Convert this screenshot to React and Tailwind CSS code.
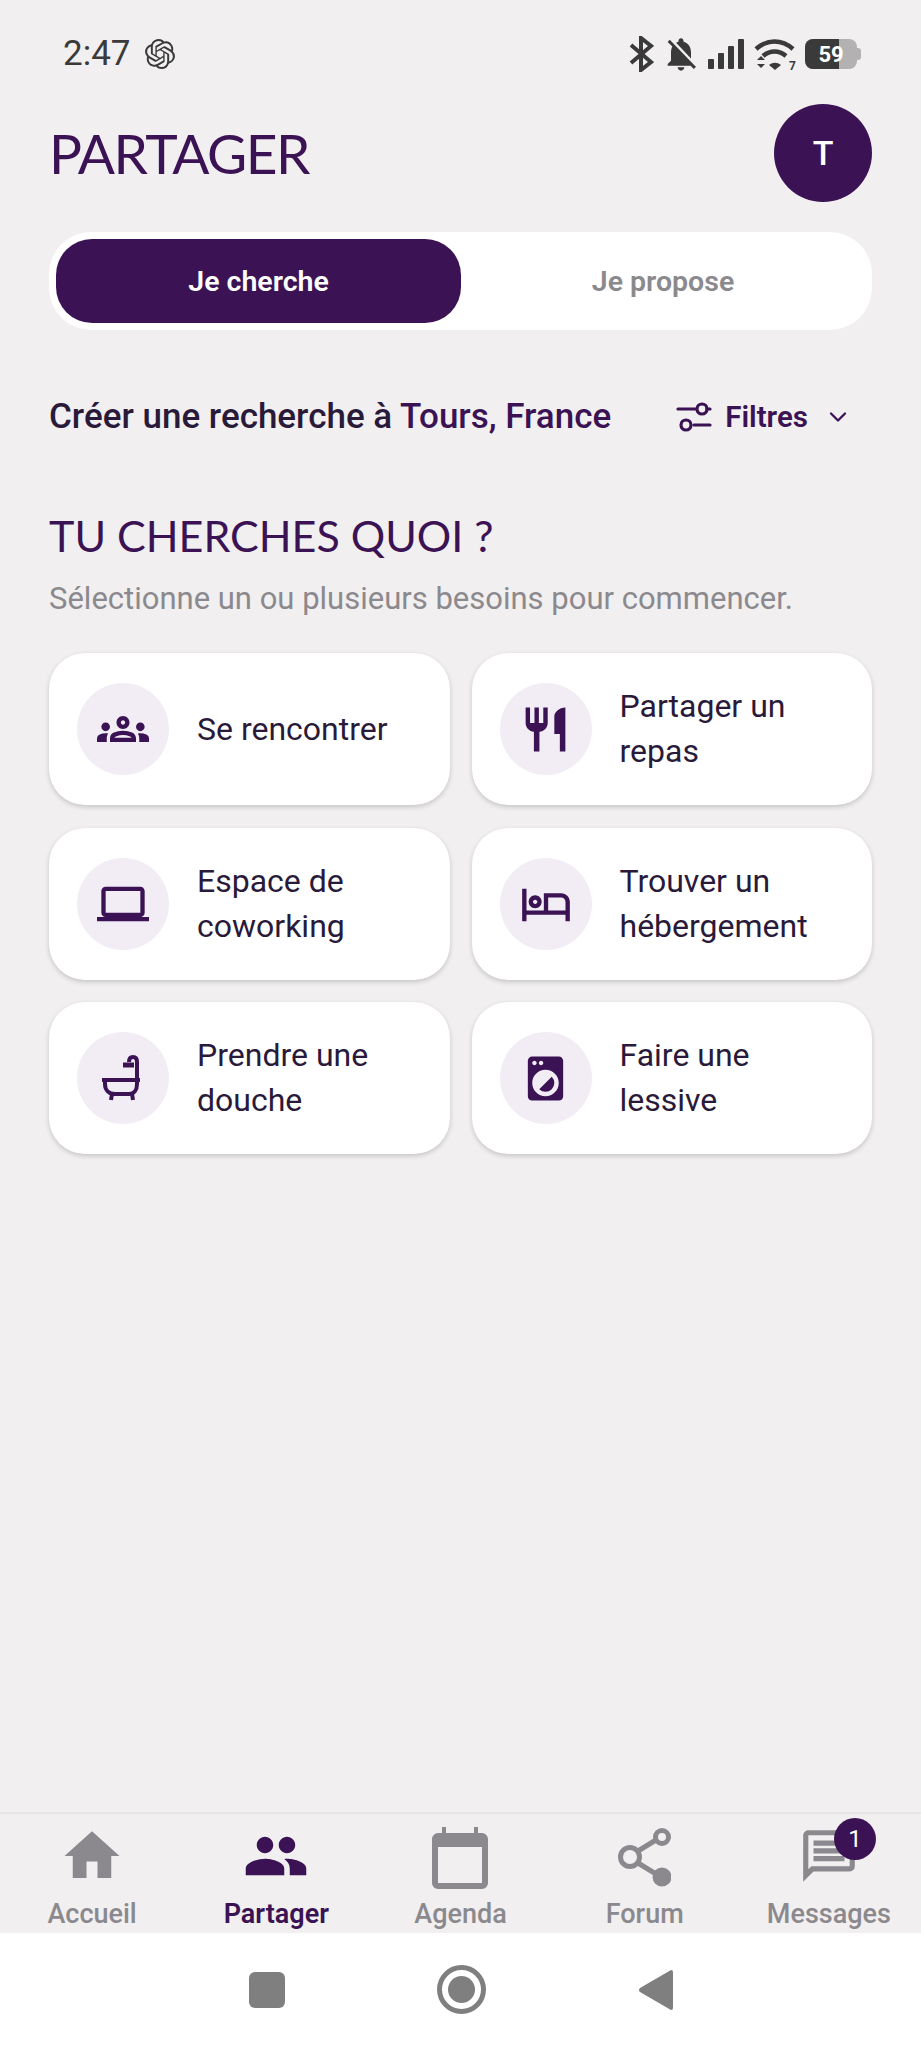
import React from 'react';
import { ChevronDown } from 'lucide-react';
import {
  MdHome,
  MdLaptop,
  MdLocalLaundryService,
  MdNotificationsOff,
  MdOutlineGroups,
  MdOutlineHotel,
  MdOutlineMessage,
  MdPeople,
  MdRestaurant,
} from 'react-icons/md';
import { SiOpenai } from 'react-icons/si';

const BathIcon = ({ className }) => (
  <svg viewBox="0 0 48 48" className={className} fill="none" stroke="currentColor" strokeWidth="4">
    <path d="M3 26h38" strokeWidth="4" />
    <path d="M6 26v4c0 6 4 10 10 10h14c5 0 8-4 8-10v-4" />
    <path d="M13 40l-1 6M33 40l1 6" />
    <path d="M38 26V8c0-3-1-5-4-5s-4 2-4 5" />
    <path d="M24 11h11" strokeWidth="5" />
  </svg>
);

const FilterIcon = ({ className }) => (
  <svg viewBox="0 0 36 36" className={className} fill="none" stroke="currentColor" strokeWidth="3.2" strokeLinecap="round">
    <path d="M2 10h18M18 26h16" />
    <circle cx="26" cy="10" r="5" />
    <circle cx="10" cy="26" r="5" />
    <path d="M31 10h3" />
  </svg>
);

const CalendarIcon = ({ className }) => (
  <svg viewBox="0 0 56 62" className={className} fill="currentColor">
    <path d="M10 0h4v6h28V0h4v6h4c3 0 6 3 6 6v44c0 3-3 6-6 6H6c-3 0-6-3-6-6V12c0-3 3-6 6-6h4zM6 20v36h44V20z" />
  </svg>
);

const ShareIcon = ({ className }) => (
  <svg viewBox="0 0 53 59" className={className} fill="none" stroke="currentColor" strokeWidth="5">
    <path d="M20 23L38 12M20 35l18 11" />
    <circle cx="12" cy="29" r="9.500" />
    <circle cx="44" cy="9" r="6.500" />
    <circle cx="44" cy="49" r="7" fill="currentColor" />
  </svg>
);

const BluetoothIcon = ({ className }) => (
  <svg viewBox="0 0 25 36" className={className} fill="none" stroke="currentColor" strokeWidth="4">
    <path d="M2 9l20 17-10 8V2l10 8L2 27" />
  </svg>
);

const WifiIcon = ({ className }) => (
  <svg viewBox="0 0 41 32" className={className} fill="none" stroke="currentColor" strokeWidth="4.500">
    <path d="M2 11C13 1 28 1 39 11" />
    <path d="M9 18c7-6 16-6 23 0" />
    <path d="M15 27l6 5 6-5c-4-3-8-3-12 0z" fill="currentColor" stroke="none" />
    <path d="M3 22l4-4 4 4zM3 26l4 4 4-4z" fill="currentColor" stroke="none" />
  </svg>
);

const SignalIcon = () => (
  <div className="flex items-end gap-[4px] h-[30px]">
    <div className="w-[6px] h-[10px] rounded-[1px] bg-[#3a3a3a]" />
    <div className="w-[6px] h-[16px] rounded-[1px] bg-[#3a3a3a]" />
    <div className="w-[6px] h-[23px] rounded-[1px] bg-[#3a3a3a]" />
    <div className="w-[6px] h-[30px] rounded-[1px] bg-[#3a3a3a]" />
  </div>
);

const Battery = () => (
  <div className="flex items-center">
    <div className="relative w-[52px] h-[30px] rounded-[8px] overflow-hidden bg-[#b3b1b2]">
      <div className="h-full w-[34px] bg-[#3a3a3a]" />
      <span className="absolute inset-0 flex items-center justify-center text-[22px] font-bold text-white">59</span>
    </div>
    <div className="w-[4px] h-[12px] rounded-r-[3px] bg-[#b3b1b2]" />
  </div>
);

const needs = [
  { label: 'Se rencontrer', Icon: MdOutlineGroups, iconClass: 'w-[52px] h-[52px]' },
  { label: 'Partager un repas', Icon: MdRestaurant, iconClass: 'w-[53px] h-[53px]' },
  { label: 'Espace de coworking', Icon: MdLaptop, iconClass: 'w-[52px] h-[52px]' },
  { label: 'Trouver un hébergement', Icon: MdOutlineHotel, iconClass: 'w-[52px] h-[52px]' },
  { label: 'Prendre une douche', Icon: BathIcon, iconClass: 'w-[48px] h-[48px]' },
  { label: 'Faire une lessive', Icon: MdLocalLaundryService, iconClass: 'w-[53px] h-[53px]' },
];

const tabs = [
  { label: 'Accueil', Icon: MdHome, iconClass: 'w-[66px] h-[66px]' },
  { label: 'Partager', Icon: MdPeople, iconClass: 'w-[66px] h-[66px]', active: true },
  { label: 'Agenda', Icon: CalendarIcon, iconClass: 'w-[56px] h-[62px] mt-[3px]' },
  { label: 'Forum', Icon: ShareIcon, iconClass: 'w-[53px] h-[59px] mt-[3px]' },
  { label: 'Messages', Icon: MdOutlineMessage, iconClass: 'w-[62px] h-[62px]', badge: 1 },
];

const App = () => {
  return (
    <div className="w-[921px] h-[2048px] flex flex-col bg-[#f1eff0] font-['Roboto',sans-serif] text-[#2a1a3a] overflow-hidden">
      <div className="h-[104px] shrink-0 pl-[63px] pr-[60px] pb-[30px] flex items-end justify-between text-[#3a3a3a]">
        <div className="flex items-center gap-[14px]">
          <span className="text-[35px] leading-[40px]">2:47</span>
          <SiOpenai className="w-[30px] h-[30px]" />
        </div>
        <div className="flex items-center gap-[10px]">
          <BluetoothIcon className="w-[25px] h-[36px]" />
          <MdNotificationsOff className="w-[40px] h-[40px] -mx-[3px]" />
          <SignalIcon />
          <div className="relative">
            <WifiIcon className="w-[41px] h-[32px]" />
            <span className="absolute -right-[1px] -bottom-[3px] text-[12px] leading-[14px] font-bold">7</span>
          </div>
          <Battery />
        </div>
      </div>

      <div className="flex-1 px-[49px]">
        <div className="flex items-center justify-between h-[98px]">
          <h1 className="font-['Lato',sans-serif] text-[55px] font-normal text-[#3b1354] tracking-[-1.500px]">PARTAGER</h1>
          <div className="w-[98px] h-[98px] rounded-full bg-[#3b1354] flex items-center justify-center text-white text-[34px] font-medium">
            T
          </div>
        </div>

        <div className="mt-[30px] h-[98px] bg-white rounded-[42px] p-[7px] flex">
          <div className="w-[405px] rounded-[36px] bg-[#3b1354] text-white text-[28.500px] font-semibold flex items-center justify-center pt-[2px]">
            Je cherche
          </div>
          <div className="flex-1 text-[#8b898d] text-[28.500px] font-semibold flex items-center justify-center pt-[2px]">
            Je propose
          </div>
        </div>

        <div className="mt-[62px] flex items-center justify-between pr-[20px]">
          <div className="text-[35px] leading-[50px] font-medium text-[#2a1a3a]">
            Créer une recherche à <span className="text-[#3b1354]">Tours, France</span>
          </div>
          <div className="flex items-center text-[#3b1354] text-[29.500px] font-semibold">
            <FilterIcon className="w-[36px] h-[36px] mr-[13px]" />
            Filtres
            <ChevronDown className="w-[28px] h-[28px] ml-[16px]" />
          </div>
        </div>

        <h2 className="mt-[66px] font-['Lato',sans-serif] text-[43px] leading-[56px] font-normal text-[#3b1354]">
          TU CHERCHES QUOI ?
        </h2>
        <p className="mt-[13px] text-[31px] leading-[44px] text-[#8b898d]">
          Sélectionne un ou plusieurs besoins pour commencer.
        </p>

        <div className="mt-[32px] grid grid-cols-2 gap-x-[22px] gap-y-[22.500px]">
          {needs.map(({ label, Icon, iconClass }) => (
            <div
              key={label}
              className="h-[152px] bg-white rounded-[36px] shadow-[0_2px_5px_rgba(0,0,0,0.18)] pl-[28px] pr-[24px] flex items-center gap-[28px]"
            >
              <div className="w-[92px] h-[92px] shrink-0 rounded-full bg-[#f2edf5] text-[#3b1354] flex items-center justify-center">
                <Icon className={iconClass} />
              </div>
              <div className="text-[32px] leading-[45px] text-[#2a1a3a]">{label}</div>
            </div>
          ))}
        </div>
      </div>

      <div className="h-[121px] shrink-0 border-t-2 border-[#e7e5e7] grid grid-cols-5">
        {tabs.map(({ label, Icon, iconClass, active, badge }) => (
          <div
            key={label}
            className={`relative flex flex-col items-center ${active ? 'text-[#3b1354]' : 'text-[#8b898d]'}`}
          >
            <div className="h-[84px] flex items-center justify-center">
              <Icon className={iconClass} />
            </div>
            <span className={`text-[27px] leading-[32px] ${active ? 'font-semibold' : 'font-medium'}`}>{label}</span>
            {badge && (
              <div className="absolute top-[4px] right-[45px] w-[42px] h-[42px] rounded-full bg-[#3b1354] text-white text-[24px] flex items-center justify-center">
                {badge}
              </div>
            )}
          </div>
        ))}
      </div>

      <div className="h-[115px] shrink-0 bg-white flex items-center justify-center pb-[2px]">
        <div className="w-[36px] h-[36px] rounded-[6px] bg-[#7f7f7f]" />
        <div className="ml-[152px] w-[49px] h-[49px] rounded-full border-[5px] border-[#7f7f7f] flex items-center justify-center">
          <div className="w-[27px] h-[27px] rounded-full bg-[#7f7f7f]" />
        </div>
        <svg viewBox="0 0 34 40" className="ml-[153px] w-[34px] h-[40px]" fill="#7f7f7f">
          <path d="M32 0a2 2 0 0 1 2 2v36a2 2 0 0 1-2 2L1 22a2.500 2.500 0 0 1 0-4z" />
        </svg>
      </div>
    </div>
  );
};

export default App;
